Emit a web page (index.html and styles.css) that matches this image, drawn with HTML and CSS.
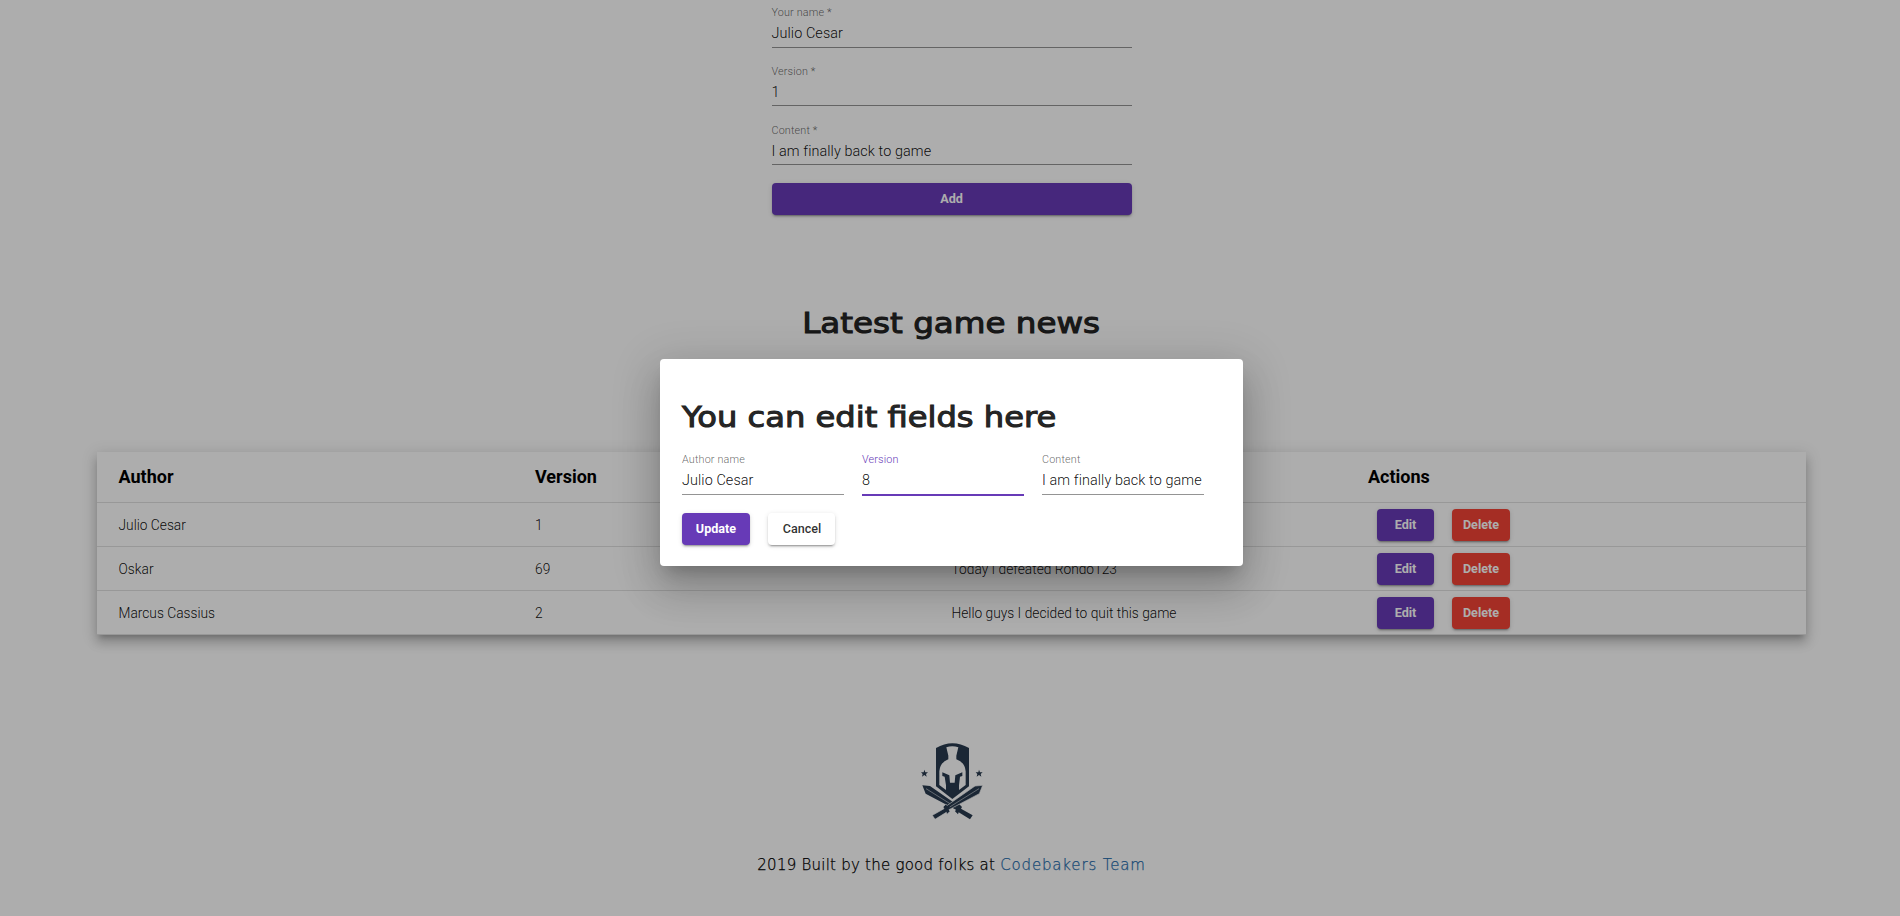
FILE: index.html
```
<!DOCTYPE html>
<html lang="en">
<head>
<meta charset="utf-8">
<title>Game news</title>
<link rel="stylesheet" href="styles.css">
</head>
<body>
<main class="page">
  <form class="add-form">
    <div class="field"><span class="label">Your name *</span><span class="value">Julio Cesar</span></div>
    <div class="field"><span class="label">Version *</span><span class="value">1</span></div>
    <div class="field"><span class="label">Content *</span><span class="value">I am finally back to game</span></div>
    <button class="btn primary wide" type="button">Add</button>
  </form>
  <h1 class="title page-title"><span class="fit-news">Latest game news</span></h1>
  <section class="table">
    <div class="row head"><span>Author</span><span>Version</span><span>Content</span><span>Actions</span></div>
    <div class="row"><span>Julio Cesar</span><span>1</span><span>I am finally back to game</span><span class="actions"><button class="btn primary edit">Edit</button><button class="btn danger">Delete</button></span></div>
    <div class="row"><span>Oskar</span><span>69</span><span>Today I defeated Rondo123</span><span class="actions"><button class="btn primary edit">Edit</button><button class="btn danger">Delete</button></span></div>
    <div class="row"><span>Marcus Cassius</span><span>2</span><span>Hello guys I decided to quit this game</span><span class="actions"><button class="btn primary edit">Edit</button><button class="btn danger">Delete</button></span></div>
  </section>
  <footer class="footer">
    <svg class="logo" viewBox="0 0 240 300">
      <path fill="#283a4f" d="M78 54Q127 26 177 54V169L127 207L78 169Z"/>
      <path fill="#fff" d="M109 52Q127 46 145 52L139 77V88Q165 97 167 124V165L147 180V166L150 140L157 138V127L136 136L134 158H120L118 136L97 127V138L104 140L108 166V180L88 165V124Q90 97 115 88V77Z"/>
      <path fill="#283a4f" d="M37 166L60 168L143 226L148 223L156 231L153 236L188 256L180 268L146 247L144 253L135 244L138 239L47 191Z"/>
      <path fill="none" stroke="#fff" stroke-width="1.5" d="M48 176L136 231"/>
      <g transform="matrix(-1 0 0 1 255 0)">
        <path fill="#283a4f" stroke="#fff" stroke-width="2" d="M37 166L60 168L143 226L148 223L156 231L153 236L188 256L180 268L146 247L144 253L135 244L138 239L47 191Z"/>
        <path fill="none" stroke="#fff" stroke-width="1.5" d="M48 176L136 231"/>
      </g>
      <path fill="#283a4f" d="M43 119L46 127L54 127L48 132L50 140L43 135L36 140L38 132L33 127L41 127Z"/>
      <path fill="#283a4f" transform="translate(164 0)" d="M43 119L46 127L54 127L48 132L50 140L43 135L36 140L38 132L33 127L41 127Z"/>
    </svg>
    <p class="credit">2019 Built by the good folks at <a>Codebakers Team</a></p>
  </footer>
</main>
<div class="overlay">
  <div class="dialog">
    <h2 class="title dialog-title"><span class="fit-dialog">You can edit fields here</span></h2>
    <div class="fields">
      <div class="field"><span class="label">Author name</span><span class="value">Julio Cesar</span></div>
      <div class="field focused"><span class="label">Version</span><span class="value">8</span></div>
      <div class="field"><span class="label">Content</span><span class="value">I am finally back to game</span></div>
    </div>
    <div class="buttons"><button class="btn primary update">Update</button><button class="btn plain">Cancel</button></div>
  </div>
</div>
</body>
</html>
```
FILE: styles.css
```
* { box-sizing: border-box; }
body { margin: 0; height: 916px; overflow: hidden; background: #fff; color: #000; font-family: Roboto, sans-serif; font-size: 14.4px; }
.page { height: 916px; display: flex; flex-direction: column; padding: 5.9px 0 0 3px; }
.add-form { width: 360px; margin: 0 auto; height: 209.2px; }
.field { height: 58.5px; display: flex; flex-direction: column; }
.field::after { content: ""; display: block; height: 1px; background: #949494; flex: none; }
.label { height: 13px; line-height: 14px; font-size: 10.8px; color: rgba(0,0,0,.62); font-weight: 300; letter-spacing: .15px; }
.value { height: 28px; line-height: 29.5px; font-size: 14.4px; color: rgba(0,0,0,.95); font-weight: 300; letter-spacing: .09px; white-space: nowrap; }
.add-form .field + .field .label { line-height: 15px; }
.add-form .field + .field .value { line-height: 31px; }
.btn { height: 32px; border: 0; border-radius: 4px; padding: 0; font: 500 12.6px/32px Roboto, sans-serif; color: #fff; box-shadow: 0 3px 1px -2px rgba(0,0,0,.2), 0 2px 2px 0 rgba(0,0,0,.14), 0 1px 5px 0 rgba(0,0,0,.12); }
.primary { background: #673ab7; font-weight: 700; }
.danger { background: #f44336; width: 58px; font-weight: 700; }
.plain { background: #fff; color: rgba(0,0,0,.82); width: 67px; padding-left: 1px; }
.wide { width: 100%; margin-top: 1.5px; display: block; }
.edit { width: 57px; }
.update { width: 68px; }
.title { margin: 0; font: 400 28px/36px "DejaVu Sans", sans-serif; color: rgba(0,0,0,.87); white-space: nowrap; -webkit-text-stroke: 1px #212121; }
.title span { display: inline-block; }
.fit-news { transform: scaleX(1.162); }
.fit-dialog { transform: scaleX(1.148); transform-origin: left; }
.page-title { height: 237px; padding-top: 90.5px; text-align: center; }
.table { width: 1709px; margin: 0 auto; box-shadow: 0 5px 5px -3px rgba(0,0,0,.2), 0 8px 10px 1px rgba(0,0,0,.14), 0 3px 14px 2px rgba(0,0,0,.12); }
.row { height: 44px; display: grid; grid-template-columns: repeat(4, 1fr); align-items: center; padding: 0 21.5px; border-bottom: 1px solid rgba(0,0,0,.12); font-weight: 300; font-size: 13.75px; color: rgba(0,0,0,.95); }
.head { height: 51px; padding-bottom: 1px; font-size: 18px; font-weight: 700; color: #000; }
.actions { display: flex; gap: 18px; padding-left: 9px; }
.footer { display: flex; flex-direction: column; align-items: center; padding-top: 95px; }
.logo { width: 80px; height: 100px; margin-right: 3px; }
.credit { margin: 22px 0 0; font: 200 15px/26px "DejaVu Sans", sans-serif; white-space: nowrap; letter-spacing: .24px; -webkit-text-stroke: .25px; }
.credit a { color: #296fae; letter-spacing: .84px; }
.overlay { position: absolute; inset: 0; background: rgba(0,0,0,.32); padding-top: 359px; padding-left: 660px; }
.dialog { width: 583px; height: 207px; background: #fff; border-radius: 4px; padding: 0 22px; box-shadow: 0 11px 15px -7px rgba(0,0,0,.2), 0 24px 38px 3px rgba(0,0,0,.14), 0 9px 46px 8px rgba(0,0,0,.12); }
.dialog-title { height: 94px; padding-top: 41px; }
.fields { display: flex; gap: 18px; }
.fields .field { width: 162px; height: 60px; }
.focused .label { color: #673ab7; }
.focused::after { height: 2px; background: #673ab7; }
.buttons { display: flex; gap: 18px; }
```
